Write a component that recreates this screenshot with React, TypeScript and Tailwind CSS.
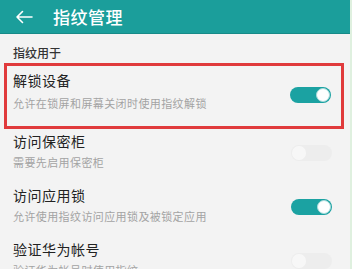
import React from 'react';

interface Row {
  title: string;
  desc: string;
  on: boolean;
  disabled?: boolean;
}

const rows: Row[] = [
  { title: '访问保密柜', desc: '需要先启用保密柜', on: false, disabled: true },
  { title: '访问应用锁', desc: '允许使用指纹访问应用锁及被锁定应用', on: true },
  { title: '验证华为帐号', desc: '验证华为帐号时使用指纹', on: false, disabled: true },
];

function Toggle({ on, disabled }: { on: boolean; disabled?: boolean }) {
  if (on) {
    return (
      <div className="w-[41px] h-[16px] rounded-full bg-[#1ba2a2] flex items-center justify-end pr-[1px] shrink-0">
        <div className="w-[14px] h-[14px] rounded-full bg-white border border-[#a8dada]" />
      </div>
    );
  }
  return (
    <div
      className={`w-[41px] h-[16px] rounded-full bg-[#e6e6e6] flex items-center pl-[1px] shrink-0 ${
        disabled ? 'opacity-40' : ''
      }`}
    >
      <div className="w-[14px] h-[14px] rounded-full bg-white" />
    </div>
  );
}

function Item({ row }: { row: Row }) {
  return (
    <div className="h-[54px] pt-[2px] pl-[13px] pr-[18px] flex items-start">
      <div className="flex-1 min-w-0">
        <div className="h-[20px] leading-[20px] text-[14px] text-[#222] tracking-[0.5px]">{row.title}</div>
        <div className="mt-[3px] h-[16px] leading-[16px] text-[11px] text-[#a3a3a3] tracking-[0.4px] whitespace-nowrap">
          {row.desc}
        </div>
      </div>
      <div className="mt-[14px]">
        <Toggle on={row.on} disabled={row.disabled} />
      </div>
    </div>
  );
}

export default function App() {
  return (
    <div
      className="w-[352px] h-[269px] overflow-hidden bg-[#f3f3f3] border-r-2 border-[#dff0df]"
      style={{ fontFamily: '"Noto Sans CJK SC", "Noto Sans", sans-serif' }}
    >
      <div className="h-[34px] bg-[#1b9e9b] border-b border-[#178a88] flex items-center pl-[15px]">
        <svg width="18" height="14" viewBox="0 0 18 14" fill="none" className="shrink-0">
          <path d="M17 7H2M7.5 1.5L2 7l5.5 5.5" stroke="white" strokeWidth="1.6" strokeLinecap="round" strokeLinejoin="round" />
        </svg>
        <span className="ml-[20px] text-white text-[17px] font-medium tracking-[0.5px] leading-none">指纹管理</span>
      </div>

      <div className="h-[29px] pl-[13px] flex items-center pt-[9px]">
        <span className="text-[12px] text-[#333] font-medium leading-none">指纹用于</span>
      </div>

      <div className="mx-[4px] mr-[6px] h-[66px] border-[3px] border-[#e03a3c] pt-[4px] pl-[6px] pr-[10px] flex items-start">
        <div className="flex-1 min-w-0">
          <div className="h-[20px] leading-[20px] text-[14px] text-[#222] tracking-[0.5px]">解锁设备</div>
          <div className="mt-[5px] h-[16px] leading-[16px] text-[11px] text-[#a3a3a3] tracking-[0.4px] whitespace-nowrap">
            允许在锁屏和屏幕关闭时使用指纹解锁
          </div>
        </div>
        <div className="mt-[17px]">
          <Toggle on />
        </div>
      </div>

      {rows.map((r) => (
        <Item key={r.title} row={r} />
      ))}
    </div>
  );
}
